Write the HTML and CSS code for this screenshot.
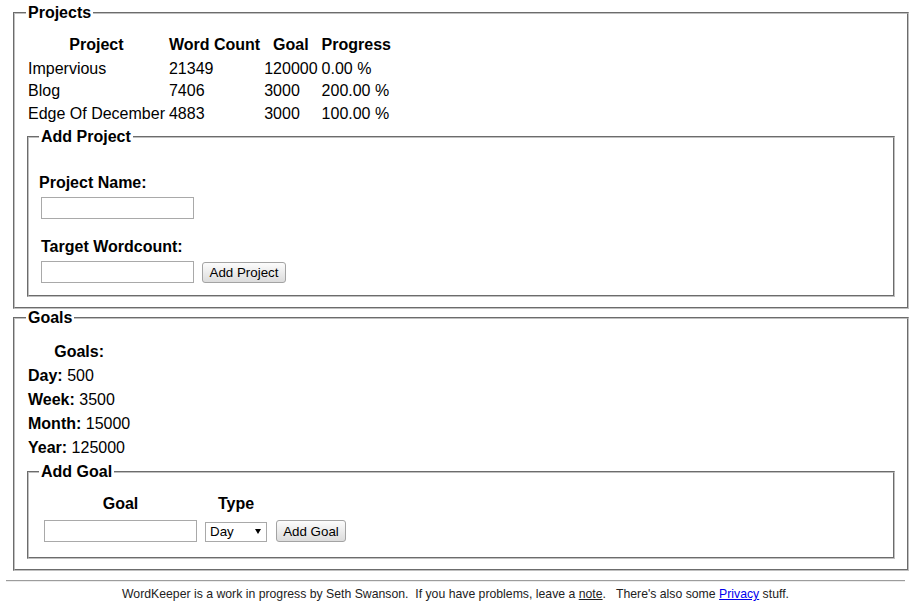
FILE: index.html
```html
<!DOCTYPE html>
<html lang="en">

<head>
  <meta charset="UTF-8" />
  <title>WordKeeper</title>
  <link rel="stylesheet" href="styles.css">
</head>

<body>
  <div class="page">
    <fieldset class="panel">
      <legend>Projects</legend>
      <table class="project-table">
        <thead>
          <tr>
            <th>Project</th>
            <th>Word Count</th>
            <th>Goal</th>
            <th>Progress</th>
          </tr>
        </thead>
        <tbody>
          <tr>
            <td>Impervious</td>
            <td>21349</td>
            <td>120000</td>
            <td>0.00 %</td>
          </tr>
          <tr>
            <td>Blog</td>
            <td>7406</td>
            <td>3000</td>
            <td>200.00 %</td>
          </tr>
          <tr>
            <td>Edge Of December</td>
            <td>4883</td>
            <td>3000</td>
            <td>100.00 %</td>
          </tr>
        </tbody>
      </table>

      <fieldset class="panel sub-panel">
        <legend>Add Project</legend>
        <div class="field-label field-label-first">Project Name:</div>
        <div class="field-row">
          <input type="text" class="text-input">
        </div>
        <div class="field-label">Target Wordcount:</div>
        <div class="field-row">
          <input type="text" class="text-input">
          <button class="btn btn-project">Add Project</button>
        </div>
      </fieldset>
    </fieldset>

    <fieldset class="panel goals-panel">
      <legend>Goals</legend>
      <table class="goal-list">
        <tr>
          <th>Goals:</th>
        </tr>
        <tr>
          <td><b>Day:</b> 500</td>
        </tr>
        <tr>
          <td><b>Week:</b> 3500</td>
        </tr>
        <tr>
          <td><b>Month:</b> 15000</td>
        </tr>
        <tr>
          <td><b>Year:</b> 125000</td>
        </tr>
      </table>

      <fieldset class="panel sub-panel">
        <legend>Add Goal</legend>
        <table class="goal-form">
          <tr>
            <th class="col-goal">Goal</th>
            <th class="col-type">Type</th>
            <th class="col-add"></th>
          </tr>
          <tr>
            <td class="col-goal"><input type="text" class="text-input"></td>
            <td class="col-type">
              <span class="select-wrap">
                <select class="type-select">
                  <option>Day</option>
                  <option>Week</option>
                  <option>Month</option>
                  <option>Year</option>
                </select>
              </span>
            </td>
            <td class="col-add"><button class="btn btn-goal">Add Goal</button></td>
          </tr>
        </table>
      </fieldset>
    </fieldset>
  </div>

  <div class="footer">
    <hr class="footer-rule">
    <p class="footer-text">
      WordKeeper is a work in progress by Seth Swanson. &nbsp;If you have problems, leave a
      <a href="#" class="note-link">note</a>. &nbsp; There's also some <a href="#" class="privacy-link">Privacy</a> stuff.
    </p>
  </div>
</body>

</html>
```

FILE: styles.css
```css
/* --- BASE --- */
body {
  margin: 0;
  font-family: "Liberation Sans", Arial, sans-serif;
  font-size: 16px;
  color: #000;
  background: #fff;
}

.page {
  padding: 4px 11px 0 13px;
}

/* --- FIELDSETS --- */
.panel {
  margin: 0;
  padding: 12px 12px 10px 12px;
  border: 2px groove #c0c0c0;
}

.panel legend {
  padding: 0 2px;
  margin-left: -1px;
  font-weight: bold;
}

.goals-panel {
  padding-top: 8px;
}

.sub-panel {
  margin: 3px 0 0 0;
  padding: 8px 12px 12px 12px;
}

.sub-panel legend {
  margin-left: -2px;
}

/* --- PROJECT TABLE --- */
.project-table {
  border-collapse: collapse;
  margin-left: -1px;
}

.project-table th,
.project-table td {
  padding: 2px 2px;
  line-height: 18.6px;
  text-align: left;
}

.project-table th {
  text-align: center;
  padding-bottom: 3px;
}

/* --- ADD PROJECT --- */
.field-label {
  font-weight: bold;
  margin-top: 19px;
  line-height: 18px;
}

.field-label-first {
  margin-top: 20px;
  margin-left: -2px;
}

.field-row {
  display: flex;
  align-items: center;
  gap: 8px;
  margin-top: 5px;
}

.text-input {
  box-sizing: border-box;
  width: 153px;
  height: 22px;
  margin: 0;
  padding: 1px 3px;
  border: 1px solid #a9a9a9;
  font-family: "Liberation Sans", Arial, sans-serif;
  font-size: 13.33px;
}

.btn {
  box-sizing: border-box;
  height: 21px;
  margin: 0;
  padding: 0;
  border: 1px solid #a3a3a3;
  border-radius: 3px;
  background: linear-gradient(#fcfcfc, #dcdcdc);
  font-family: "Liberation Sans", Arial, sans-serif;
  font-size: 13.33px;
  color: #000;
  white-space: nowrap;
}

.btn-project {
  width: 84px;
  margin-top: 1px;
}

.btn-goal {
  width: 70px;
  height: 22px;
}

/* --- GOALS --- */
.goal-list {
  border-collapse: collapse;
}

.goal-list th,
.goal-list td {
  padding: 2px 1px;
  line-height: 20px;
  text-align: left;
}

.goal-list th {
  text-align: center;
  padding-top: 7px;
  padding-bottom: 3px;
  line-height: 19px;
}

.goal-form {
  border-collapse: collapse;
  margin-top: 5px;
  margin-bottom: 3px;
}

.goal-form th,
.goal-form td {
  padding: 0;
  line-height: 19px;
  text-align: center;
}

.goal-form td {
  padding-top: 7px;
  vertical-align: middle;
  text-align: left;
}

.goal-form .col-goal {
  padding-left: 3px;
  padding-right: 4px;
}

.goal-form .col-type {
  padding-left: 4px;
  padding-right: 4px;
}

.goal-form .col-add {
  padding-left: 5px;
}

.goal-form .text-input,
.goal-form .btn {
  vertical-align: middle;
}

.select-wrap {
  position: relative;
  display: inline-block;
  vertical-align: middle;
}

.type-select {
  appearance: none;
  -webkit-appearance: none;
  box-sizing: border-box;
  width: 62px;
  height: 20px;
  margin: 0;
  padding: 0 0 0 4px;
  border: 1px solid #a9a9a9;
  border-radius: 0;
  background: #fff;
  font-family: "Liberation Sans", Arial, sans-serif;
  font-size: 13.33px;
  color: #000;
  display: block;
}

.select-wrap::after {
  content: "";
  position: absolute;
  right: 6px;
  top: 7px;
  border-left: 3px solid transparent;
  border-right: 3px solid transparent;
  border-top: 5px solid #000;
  pointer-events: none;
}

/* --- FOOTER --- */
.footer {
  margin: 9px 15px 0 6px;
}

.footer-rule {
  margin: 0;
  height: 0;
  border: 0;
  border-top: 1px solid #9c9c9c;
  border-bottom: 1px solid #ececec;
}

.footer-text {
  margin: 5px 0 0 0;
  text-align: center;
  font-size: 12.25px;
  color: #222;
}

.note-link {
  color: #222;
}

.privacy-link {
  color: #0000ee;
}
```
